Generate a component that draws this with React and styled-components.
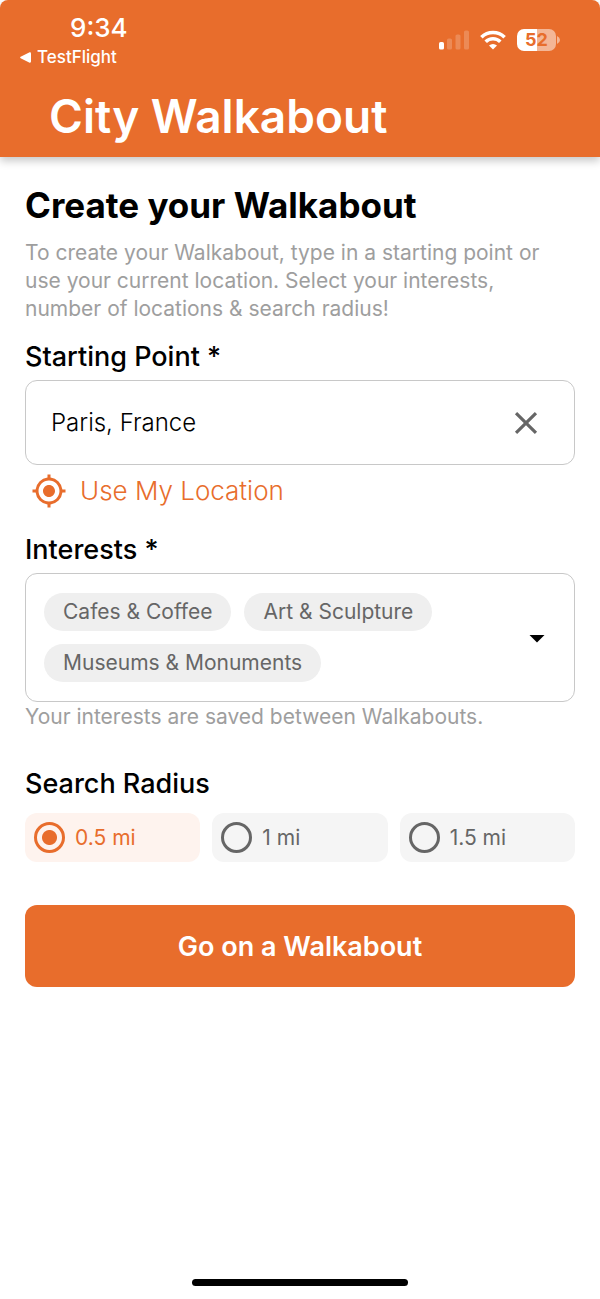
import React, { useState } from "react"
import styled, { createGlobalStyle } from "styled-components"
import { MdArrowDropDown, MdClose, MdMyLocation } from "react-icons/md"

const Colors = {
  orange: "#e86d2c",
  lightOrange: "#fef3ee",
  black: "#000",
  white: "#fff",
  darkGray: "#666",
  gray: "#9e9e9e",
  border: "#c8c8c8",
  chip: "#efefef",
  lightGray: "#f5f5f5",
}

const interests = ["Cafes & Coffee", "Art & Sculpture", "Museums & Monuments"]

const radiusOptions = ["0.5 mi", "1 mi", "1.5 mi"]

const SignalIcon = () => (
  <svg width="30" height="20" viewBox="0 0 30 20" fill="#fff" aria-hidden="true">
    <rect x="0" y="12" width="5" height="7.5" rx="1.6" />
    <rect x="8" y="8.5" width="5" height="11" rx="1.6" opacity="0.2" />
    <rect x="16.5" y="4.5" width="5" height="15" rx="1.6" opacity="0.2" />
    <rect x="25" y="0.5" width="5" height="19" rx="1.6" opacity="0.2" />
  </svg>
)

const WifiIcon = () => (
  <svg width="26" height="20" viewBox="0 0 26 20" aria-hidden="true">
    <g fill="none" stroke="#fff" strokeWidth="3.6">
      <path d="M1.4 7.2 A16.6 16.6 0 0 1 24.6 7.2" />
      <path d="M5.7 11.7 A10.4 10.4 0 0 1 20.3 11.7" />
    </g>
    <path d="M13 19.6 L9 15.6 A6 6 0 0 1 17 15.6 Z" fill="#fff" />
  </svg>
)

const App = () => {
  const [startingPoint, setStartingPoint] = useState("Paris, France")
  const [radius, setRadius] = useState("0.5 mi")

  return (
    <Page>
      <GlobalStyle />
      <Header>
        <StatusBar>
          <div>
            <Time>9:34</Time>
            <BackLink href="#">
              <svg width="11" height="11" viewBox="0 0 11 11" fill="#fff" aria-hidden="true">
                <path d="M0.6 4.8 L9.6 0.3 Q11 0 11 1.4 V9.6 Q11 11 9.6 10.7 L0.6 6.2 Q-0.4 5.5 0.6 4.8 Z" />
              </svg>
              TestFlight
            </BackLink>
          </div>
          <StatusIcons>
            <SignalIcon />
            <WifiIcon />
            <Battery>
              <BatteryLevel>52</BatteryLevel>
              <svg width="3" height="8" viewBox="0 0 3 8" aria-hidden="true">
                <path d="M0 0 Q3 1.5 3 4 Q3 6.5 0 8 Z" fill="#fff" opacity="0.5" />
              </svg>
            </Battery>
          </StatusIcons>
        </StatusBar>
        <AppTitle>City Walkabout</AppTitle>
      </Header>

      <Form onSubmit={e => e.preventDefault()}>
        <Heading>Create your Walkabout</Heading>
        <Intro>
          To create your Walkabout, type in a starting point or use your current
          location. Select your interests, number of locations & search radius!
        </Intro>

        <Field>
          <Label htmlFor="starting-point">Starting Point *</Label>
          <InputBox>
            <TextInput
              id="starting-point"
              type="text"
              value={startingPoint}
              onChange={e => setStartingPoint(e.target.value)}
            />
            <ClearButton
              type="button"
              aria-label="Clear"
              onClick={() => setStartingPoint("")}
            >
              <MdClose size={38} />
            </ClearButton>
          </InputBox>
          <LocationButton type="button">
            <MdMyLocation size={36} />
            Use My Location
          </LocationButton>
        </Field>

        <InterestsField>
          <Label as="span" id="interests-label">
            Interests *
          </Label>
          <InterestsSelect
            type="button"
            aria-haspopup="listbox"
            aria-labelledby="interests-label"
          >
            <Chips>
              {interests.map(interest => (
                <Chip key={interest}>{interest}</Chip>
              ))}
            </Chips>
            <MdArrowDropDown size={36} />
          </InterestsSelect>
          <HelperText>Your interests are saved between Walkabouts.</HelperText>
        </InterestsField>

        <RadiusField>
          <Legend>Search Radius</Legend>
          <Options>
            {radiusOptions.map(option => (
              <Option key={option} $checked={radius === option}>
                <Radio
                  type="radio"
                  name="radius"
                  value={option}
                  checked={radius === option}
                  onChange={() => setRadius(option)}
                />
                {option}
              </Option>
            ))}
          </Options>
        </RadiusField>

        <SubmitButton type="submit">Go on a Walkabout</SubmitButton>
      </Form>

      <HomeIndicator />
    </Page>
  )
}

const GlobalStyle = createGlobalStyle`
  *,
  *::before,
  *::after {
    box-sizing: border-box;
  }

  body {
    margin: 0;
    background-color: ${Colors.white};
    color: ${Colors.black};
    font-family: Inter, "Liberation Sans", sans-serif;
  }

  button,
  input {
    font-family: inherit;
  }

  svg {
    display: block;
    flex-shrink: 0;
  }
`

const Page = styled.div`
  display: flex;
  flex-direction: column;
  min-height: 100vh;
`

const Header = styled.header`
  padding: 12px 40px 13px 20px;
  border-radius: 8px 8px 0 0;
  background-color: ${Colors.orange};
  color: ${Colors.white};
  box-shadow: 0 4px 8px rgba(0, 0, 0, 0.22);
`

const StatusBar = styled.div`
  display: flex;
  align-items: center;
  justify-content: space-between;
`

const Time = styled.div`
  padding-left: 50px;
  font-size: 26px;
  font-weight: 500;
  line-height: 32px;
`

const BackLink = styled.a`
  display: flex;
  align-items: center;
  gap: 6px;
  color: inherit;
  font-size: 17px;
  font-weight: 500;
  line-height: 26px;
  text-decoration: none;
`

const StatusIcons = styled.div`
  display: flex;
  align-items: center;
  gap: 11px;
  padding-bottom: 2px;
`

const Battery = styled.div`
  display: flex;
  align-items: center;
  gap: 1px;
`

const BatteryLevel = styled.span`
  width: 39px;
  border-radius: 7px;
  background: linear-gradient(
    to right,
    ${Colors.white} 52%,
    rgba(255, 255, 255, 0.5) 52%
  );
  color: ${Colors.orange};
  font-size: 18px;
  font-weight: 700;
  line-height: 22px;
  text-align: center;
`

const AppTitle = styled.h1`
  margin: 18px 0 0 29px;
  font-size: 46px;
  font-weight: 600;
  line-height: 56px;
`

const Form = styled.form`
  flex: 1;
  padding: 24px 25px;
`

const Heading = styled.h2`
  margin: 0;
  font-size: 35px;
  font-weight: 700;
  line-height: 48px;
`

const Intro = styled.p`
  margin: 10px 0 0;
  color: ${Colors.gray};
  font-size: 21px;
  line-height: 28px;
`

const Field = styled.div`
  margin-top: 18px;
`

const InterestsField = styled(Field)`
  margin-top: 25px;
`

const Label = styled.label`
  display: block;
  margin-bottom: 7px;
  font-size: 27px;
  font-weight: 500;
  line-height: 32px;
`

const InputBox = styled.div`
  display: flex;
  align-items: center;
  height: 85px;
  padding: 0 29px 0 25px;
  border: 1px solid ${Colors.border};
  border-radius: 12px;
`

const TextInput = styled.input`
  flex: 1;
  min-width: 0;
  padding: 0;
  border: 0;
  outline: 0;
  background: none;
  color: ${Colors.black};
  font-size: 24px;
  font-weight: 300;
  line-height: 32px;
`

const ClearButton = styled.button`
  padding: 0;
  border: 0;
  background: none;
  color: ${Colors.darkGray};
`

const LocationButton = styled.button`
  display: flex;
  align-items: center;
  gap: 13px;
  margin: 8px 0 0;
  padding: 0 6px;
  border: 0;
  background: none;
  color: ${Colors.orange};
  font-size: 26px;
  font-weight: 300;
  line-height: 36px;
`

const InterestsSelect = styled.button`
  display: flex;
  align-items: center;
  justify-content: space-between;
  width: 100%;
  padding: 19px 19px 19px 18px;
  border: 1px solid ${Colors.border};
  border-radius: 12px;
  background: none;
  color: ${Colors.black};
`

const Chips = styled.span`
  display: flex;
  flex-wrap: wrap;
  gap: 13px;
`

const Chip = styled.span`
  padding: 0 19px;
  border-radius: 19px;
  background-color: ${Colors.chip};
  color: ${Colors.darkGray};
  font-size: 21px;
  line-height: 38px;
`

const HelperText = styled.p`
  margin: 1px 0 0;
  color: ${Colors.gray};
  font-size: 21px;
  line-height: 28px;
`

const RadiusField = styled.fieldset`
  margin: 37px 0 0;
  padding: 0;
  border: 0;
`

const Legend = styled.legend`
  padding: 0;
  font-size: 27px;
  font-weight: 500;
  line-height: 32px;
`

const Options = styled.div`
  display: grid;
  grid-template-columns: repeat(3, 1fr);
  gap: 12px;
  margin-top: 13px;
`

const Option = styled.label`
  display: flex;
  align-items: center;
  gap: 10px;
  height: 49px;
  padding: 0 9px;
  border-radius: 12px;
  background-color: ${props =>
    props.$checked ? Colors.lightOrange : Colors.lightGray};
  color: ${props => (props.$checked ? Colors.orange : Colors.darkGray)};
  font-size: 21px;
`

const Radio = styled.input`
  appearance: none;
  width: 31px;
  height: 31px;
  margin: 0;
  border: 3px solid currentColor;
  border-radius: 50%;
  color: inherit;

  &:checked {
    background: radial-gradient(circle, currentColor 7px, transparent 8px);
  }
`

const SubmitButton = styled.button`
  width: 100%;
  height: 82px;
  margin-top: 43px;
  border: 0;
  border-radius: 12px;
  background-color: ${Colors.orange};
  color: ${Colors.white};
  font-size: 27px;
  font-weight: 600;
`

const HomeIndicator = styled.div`
  width: 36%;
  height: 7px;
  margin: 0 auto 13px;
  border-radius: 4px;
  background-color: ${Colors.black};
`

export default App
